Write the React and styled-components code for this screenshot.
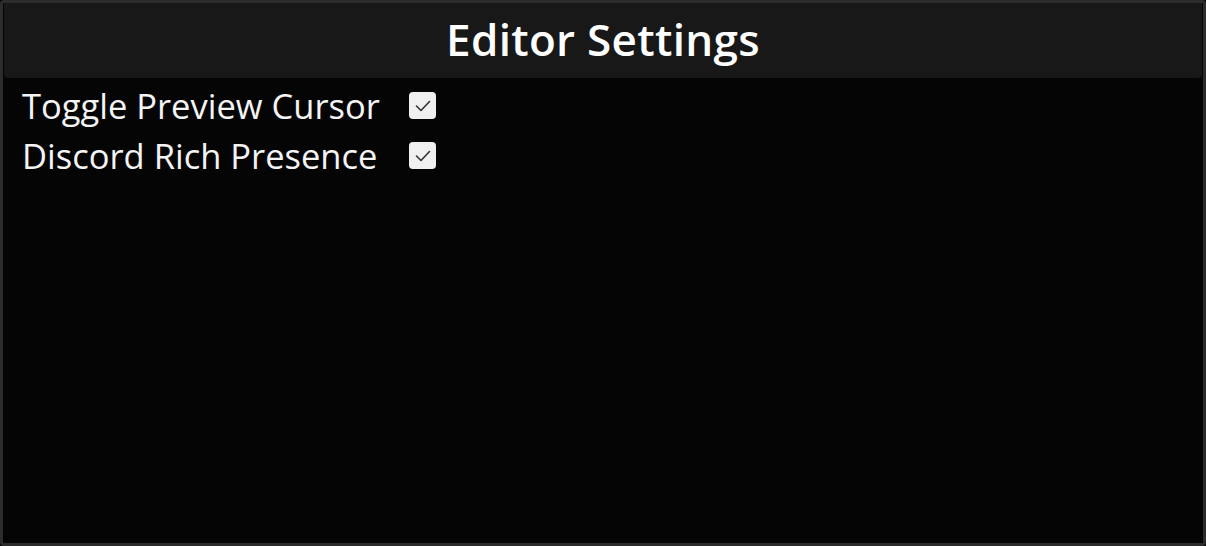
import React, { useState } from "react";
import styled, { createGlobalStyle } from "styled-components";

const GlobalStyle = createGlobalStyle`
  html, body {
    margin: 0;
    padding: 0;
    background: #050505;
  }

  * {
    box-sizing: border-box;
  }
`;

const SETTINGS = [
  { id: "previewCursor", label: "Toggle Preview Cursor" },
  { id: "discordRpc", label: "Discord Rich Presence" },
];

const App = () => {
  const [values, setValues] = useState({ previewCursor: true, discordRpc: true });

  const handleToggle = (id) => {
    setValues((prev) => ({ ...prev, [id]: !prev[id] }));
  };

  return (
    <>
      <GlobalStyle />
      <St.Frame>
        <St.Header>
          <St.Title>Editor Settings</St.Title>
        </St.Header>

        <St.List>
          {SETTINGS.map((it) => (
            <St.Row key={it.id} onClick={() => handleToggle(it.id)}>
              <St.Label>{it.label}</St.Label>
              <St.Check $checked={values[it.id]}>
                {values[it.id] && (
                  <svg width="18" height="18" viewBox="0 0 18 18" fill="none">
                    <path d="M2.5 9 L7 13.5 L15.5 4.5" stroke="#333333" strokeWidth="1.6" strokeLinecap="round" strokeLinejoin="round" />
                  </svg>
                )}
              </St.Check>
            </St.Row>
          ))}
        </St.List>
      </St.Frame>
    </>
  );
};

export default App;

const St = {
  Frame: styled.div`
    display: flex;
    flex-direction: column;

    width: 1206px;
    height: 546px;

    border: 3px solid #2c2c2c;
    border-radius: 4px;
    background-color: #050505;
    overflow: hidden;
  `,

  Header: styled.header`
    display: flex;
    align-items: center;
    justify-content: center;

    height: 75px;
    margin: 0 1px;

    border-radius: 0 0 4px 4px;
    background-color: #181818;
  `,

  Title: styled.h1`
    margin: 0 0 3px;

    color: #ffffff;
    font-family: "Open Sans", "Noto Sans", sans-serif;
    font-weight: 600;
    font-size: 44px;
    letter-spacing: 0.3px;
  `,

  List: styled.ul`
    display: flex;
    flex-direction: column;

    margin: 0;
    padding: 4px 0 0 19px;

    gap: 4px;
    list-style: none;
  `,

  Row: styled.li`
    display: flex;
    align-items: center;

    height: 46px;
    gap: 25px;
    cursor: pointer;
  `,

  Label: styled.span`
    width: 362px;

    color: #f4f4f4;
    font-family: "Open Sans", "Noto Sans", sans-serif;
    font-weight: 400;
    font-size: 34.5px;
    white-space: nowrap;
  `,

  Check: styled.span`
    display: flex;
    align-items: center;
    justify-content: center;

    width: 27px;
    height: 27px;
    margin-top: 1px;

    border-radius: 4px;
    background-color: ${({ $checked }) => ($checked ? "#f0f0f0" : "#3a3a3a")};
  `,
};
